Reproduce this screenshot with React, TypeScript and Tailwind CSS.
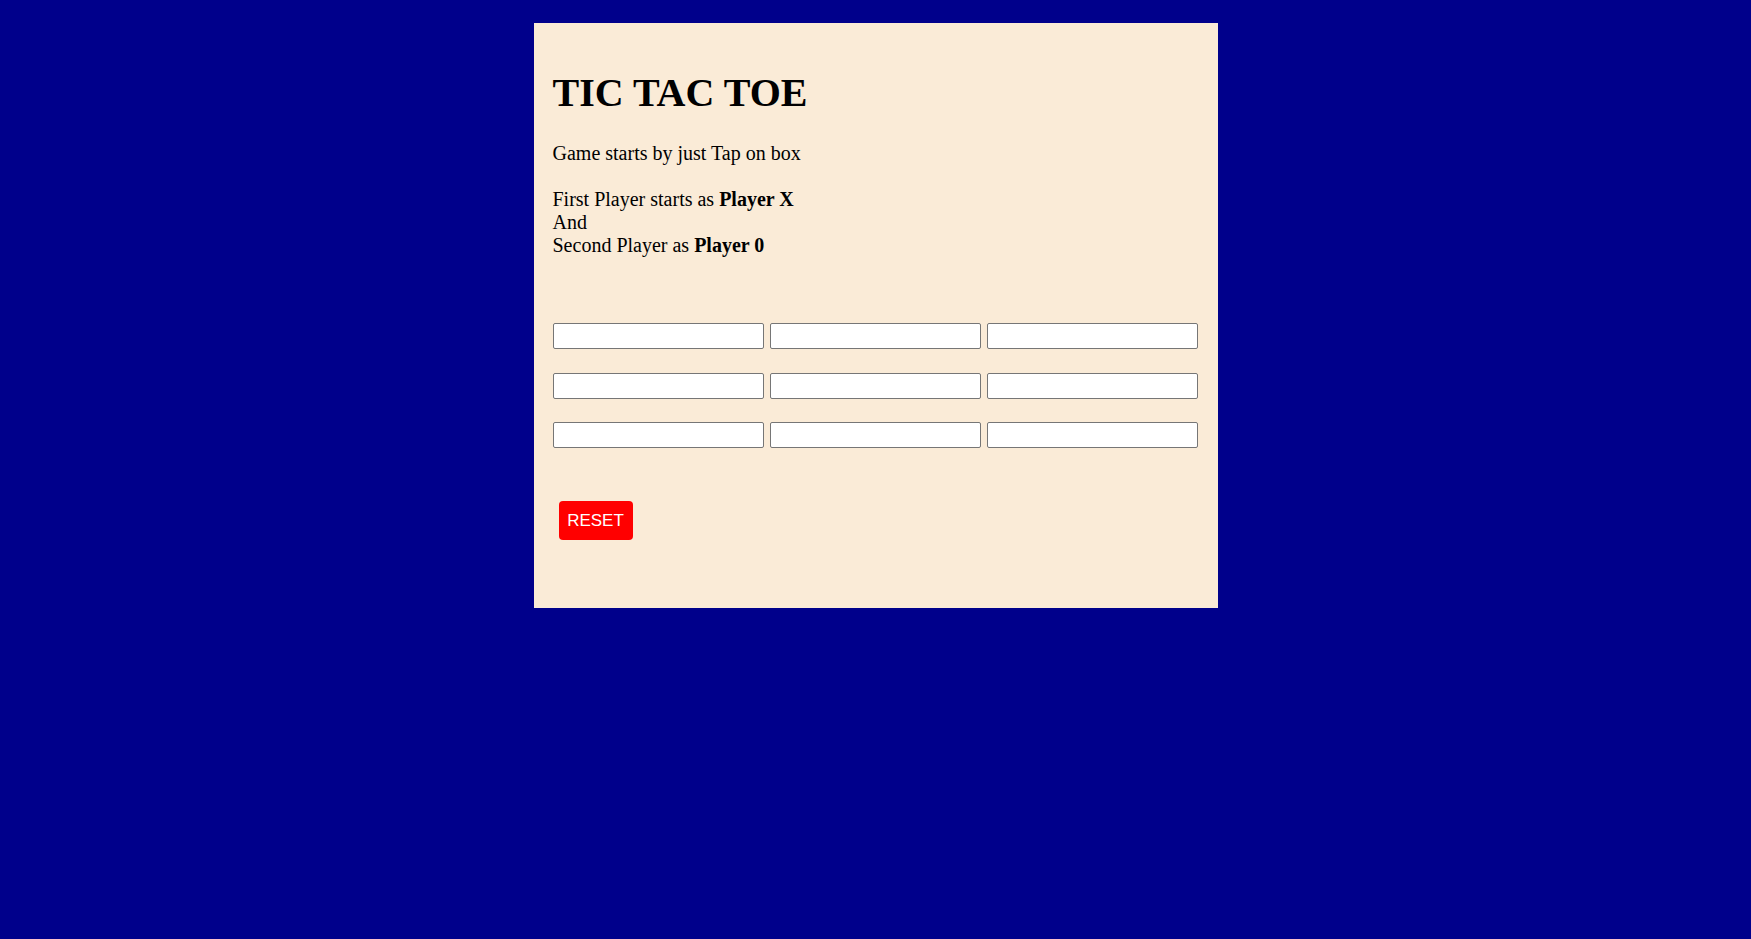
import { useState } from "react";

export default function App() {
  const [board, setBoard] = useState<string[]>(Array(9).fill(""));
  const [turn, setTurn] = useState("X");

  const play = (i: number) => {
    if (board[i]) return;
    const next = [...board];
    next[i] = turn;
    setBoard(next);
    setTurn(turn === "X" ? "0" : "X");
  };

  const reset = () => {
    setBoard(Array(9).fill(""));
    setTurn("X");
  };

  const rows = [0, 1, 2];

  return (
    <div className="min-h-screen bg-[#00008b] pt-[23px] font-['Liberation_Serif',serif] text-black">
      <div className="mx-auto h-[585px] w-[684px] bg-[#faebd7] px-[19px]">
        <h1 className="pt-[47px] text-[40px] leading-[46px] font-bold">
          TIC TAC TOE
        </h1>

        <div className="mt-[25.5px] text-[20px] leading-[23px]">
          <p>Game starts by just Tap on box</p>
          <p className="mt-[23px]">
            First Player starts as <b>Player X</b>
            <br />
            And
            <br />
            Second Player as <b>Player 0</b>
          </p>
        </div>

        {/* Board */}
        <div className="mt-[66.5px] ml-[0.5px] flex flex-col gap-[23.5px]">
          {rows.map((r) => (
            <div key={r} className="flex gap-[5.8px]">
              {rows.map((c) => {
                const i = r * 3 + c;
                return (
                  <input
                    key={i}
                    type="text"
                    readOnly
                    value={board[i]}
                    onClick={() => play(i)}
                    className="h-[26px] w-[211.2px] rounded-[2px] border border-[#767676] bg-white px-[2px] font-['Liberation_Sans',sans-serif] text-[13px] outline-none"
                  />
                );
              })}
            </div>
          ))}
        </div>

        <button
          onClick={reset}
          className="mt-[53px] ml-[6px] h-[39px] w-[74px] rounded-[4px] bg-[#ff0000] font-['Liberation_Sans',sans-serif] text-[17px] text-white"
        >
          RESET
        </button>
      </div>
    </div>
  );
}
